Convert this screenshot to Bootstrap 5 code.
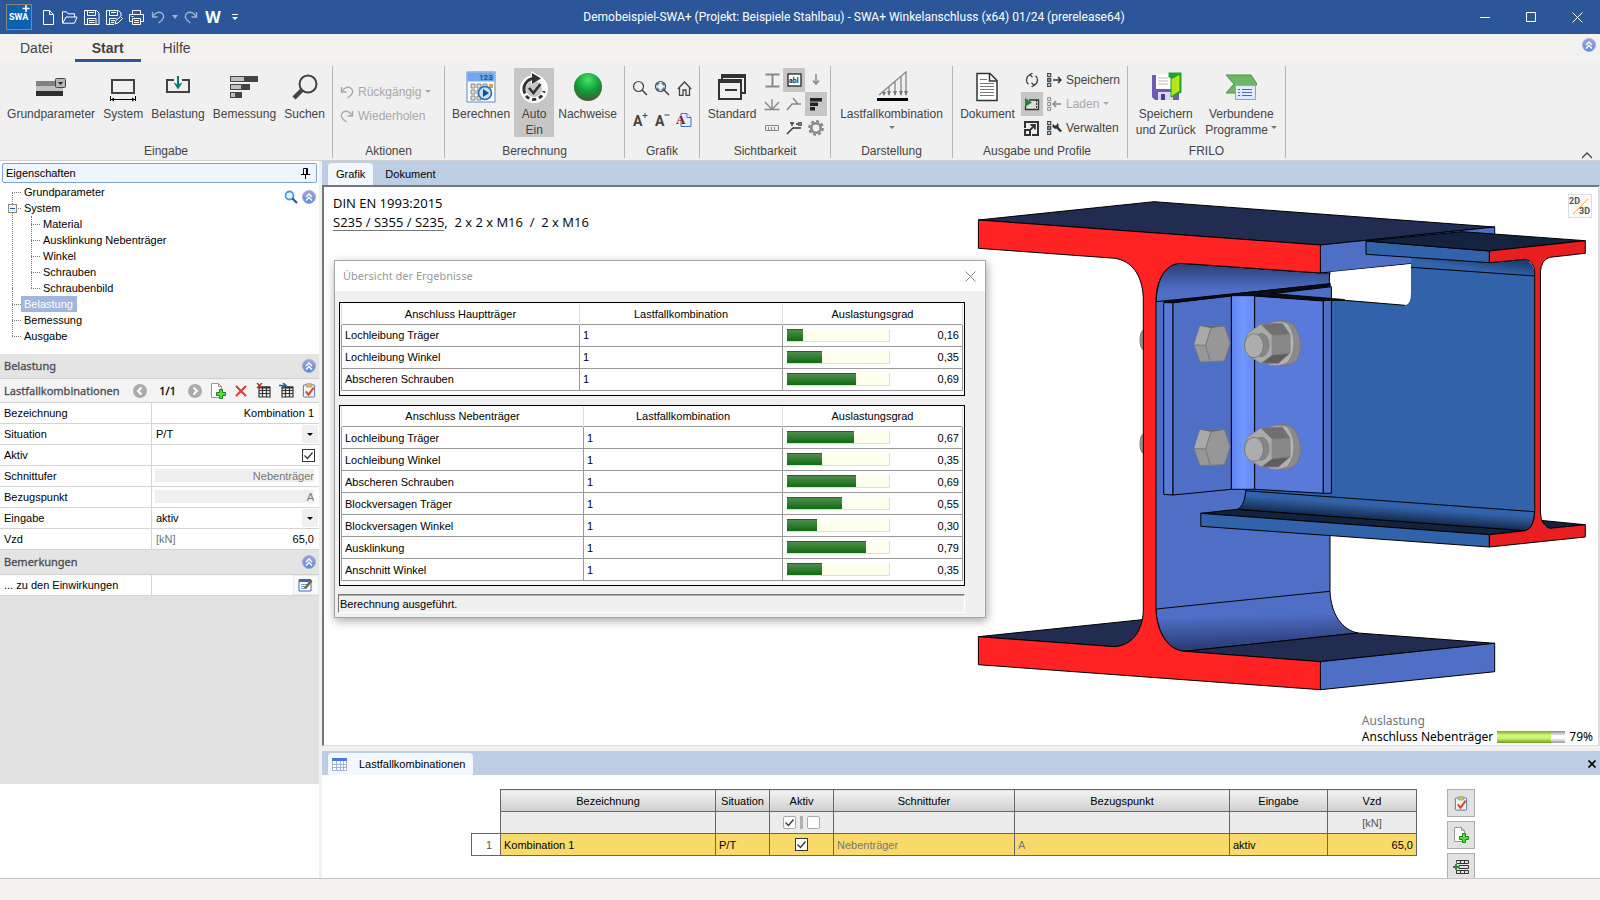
<!DOCTYPE html>
<html lang="de">
<head>
<meta charset="utf-8">
<meta name="viewport" content="width=device-width, initial-scale=1">
<title>SWA+ Winkelanschluss</title>
<link href="https://cdn.jsdelivr.net/npm/bootstrap@5.3.0/dist/css/bootstrap.min.css" rel="stylesheet">
<style>
:root{--ui:"Liberation Sans",Arial,sans-serif;--seg:"Open Sans","Noto Sans",sans-serif}
body{font-family:var(--ui);font-size:11px;line-height:16px;color:#000;background:#f0f0f0}
button{font:inherit;color:inherit;border:0;background:none;padding:0}
svg{display:block;flex:none}
.app{min-height:100vh}
.titlebar{background:#2b579a;color:#fff;height:34px}
.titlebar button{width:22px;height:30px;display:flex;align-items:center;justify-content:center}
.titlebar .narrow{width:11px}
.titlebar .win{width:46px}
.titlebar .dim{opacity:.55}
.app-title{font:12px/16px Roboto,sans-serif}
.word{font:700 16px/16px var(--seg)}
.logo{margin:0 5px 0 6px}
.rtabs{height:28px;background:#f3f2f1;gap:5px;padding-left:3px;font-size:14px;color:#444}
.rtabs button{padding:2px 17px 0;border-bottom:3px solid transparent}
.rtabs .on{font-weight:700;border-color:#2b579a}
.ribbon{height:99px;font-size:12px;color:#444;border-bottom:1px solid #d0d0d0;padding-top:4px}
.rgroup{height:92px;border-right:1px solid #b4b4b4;position:relative;padding:2px 3px 0}
.rgroup .cap{line-height:14px;text-align:center}
.big{flex:1 1 auto;display:flex;flex-direction:column;align-items:center;padding:3px 1px 0;height:69px;text-align:center;line-height:16px;white-space:nowrap}
.big svg{margin-bottom:3px}
.held{background:#c6c6c6}
.g1{width:333px}.g2{width:112px}.g3{width:180px}.g4{width:75px}.g5{width:131px}.g6{width:122px}.g7{width:175px}.g8{width:158px}
.rgroup.g7{padding:2px 7px 0 1px}
.dis{color:#a8a8a8}
.tools{display:grid;grid-template-columns:repeat(3,22px);justify-content:center}
.tools button,.cell{width:22px;height:24px;display:flex;align-items:center;justify-content:center}
.wide-tools button{height:32px}
.side{width:319px}
.pane-title{height:20px;margin:2px 2px 0;border:1px solid #7da2d8;border-radius:2px;background:#eef5fd;padding:0 6px 0 3px}
.tree-box{height:171px;background:#fff;position:relative}
.tree,.tree ul{list-style:none;margin:0;padding:0}
.tree{padding:1px 0 0 12px}
.tree ul{margin-left:7px}
.tree li{position:relative;padding-left:12px}
.tree li::before{content:"";position:absolute;left:0;top:8px;width:9px;border-top:1px dotted #777}
.tree li::after{content:"";position:absolute;left:0;top:-8px;bottom:0;border-left:1px dotted #777}
.tree>li:first-child::after{top:8px}
.tree li:last-child::after{bottom:auto;height:16px}
.tree ul li:first-child::after{top:0}
.tree a{color:#000;text-decoration:none;display:block;width:max-content}
.tree .sel{background:#a0b6de;color:#fff;margin-left:-3px;padding:0 4px 0 3px}
.twist{position:absolute;left:-4px;top:4px;width:9px;height:9px;border:1px solid #888;background:#f4f4f4;z-index:1}
.twist::after{content:"";position:absolute;left:1px;right:1px;top:3px;border-top:1px solid #2a4f9a}
.tree-tools{position:absolute;right:3px;top:7px}
.sec{height:25px;background:#e4e4e4;border-bottom:1px solid #cfcfcf;padding:0 3px 0 4px;font:11px/16px "Noto Sans",sans-serif;color:#4b4b55;-webkit-text-stroke:.3px}
.nav-row{height:24px;background:#f4f4f4;gap:4px}
.prop{display:grid;grid-template-columns:152px 1fr;height:21px;border-bottom:1px solid #d4d4d4;background:#fff}
.prop>label{padding-left:4px;line-height:20px;border-right:1px solid #d4d4d4}
.prop input,.prop select{font:inherit;border:0;background:transparent;width:100%;min-width:0;padding:0;height:20px;color:#000}
.prop input[type=text]{text-align:right;padding-right:5px}
.prop select{appearance:none;padding-left:4px;background:linear-gradient(#efefef,#efefef) right 1px center/16px 18px no-repeat}
.prop .drop{position:relative}
.prop .drop::after{content:"";position:absolute;right:6px;top:9px;border:3px solid transparent;border-top-color:#000;border-bottom:0;pointer-events:none}
.prop input:disabled{background:#efefef;color:#777;height:13px;margin:3px 5px 0 3px;padding-right:0!important;width:calc(100% - 8px)}
.tick{appearance:none;width:13px!important;height:13px!important;border:1px solid #333!important;background:#fff!important;margin:0;flex:none}
.tick:checked{background:#fff url("data:image/svg+xml,%3Csvg xmlns='http://www.w3.org/2000/svg' viewBox='0 0 11 11'%3E%3Cpath d='M1.5 5.5l3 3 5-6' fill='none' stroke='%23333' stroke-width='1.3'/%3E%3C/svg%3E")!important}
.tick.soft{border-color:#aaa!important;border-radius:2px}
.split{width:3px;background:#b5b0b0}
.main-area{margin-left:3px}
.strip{background:#bccde4;height:24px;padding:2px 0 0 6px}
.strip button{padding:0 8px;border-radius:4px 4px 0 0;height:22px}
.strip .on{background:#f2f8fe}
.canvas3d{background:#fff;border:1px solid #777;border-width:2px 2px 1px 2px;border-color:#777 #ddd #ddd #777;height:561px;position:relative;overflow:hidden}
.code-info{position:absolute;left:9px;top:7px;font:13px/19px var(--seg)}
.code-info u{text-underline-offset:3px;text-decoration-color:#777}
.dim-btn{position:absolute;right:6px;top:7px;width:24px;height:24px;border:1px solid #ddd!important;background:#fafafa!important}
.util{position:absolute;right:5px;bottom:0;font:12px/16px "Noto Sans",sans-serif}
.util-bar{width:68px;height:12px;background:linear-gradient(#888,#fff 40%,#fff 60%,#999)}
.util-bar div{height:12px;background:linear-gradient(#7ea62c,#cdf873 35%,#cdf873 60%,#6f9a22)}
.dlg{position:absolute;left:10px;top:73px;width:652px;height:358px;border:1px solid #a5a5a5;background:#f0f0f0;box-shadow:1px 3px 9px rgba(0,0,0,.35)}
.dlg-head{height:30px;background:#fff;padding:0 9px 0 8px;color:#999;font:11px/16px "Noto Sans",sans-serif}
.dlg-body{padding:11px 20px 0 4px}
.frame{border:1px solid #000;background:#fafaff;padding:1px 1px 4px;margin-bottom:9px}
.frame + .status-line{margin-top:-1px}
.res{width:100%;table-layout:fixed;border-collapse:collapse;background:#fff}
.res th{font-weight:400;text-align:center;height:20px;padding:0;border:solid #ddd;border-width:0 1px;border-color:#fff #ddd}
.res td{height:22px;border:1px solid #999;padding:0 3px}
.res .meter{width:103px;height:13px;background:#ffffee;border:solid #ddd;border-width:0 1px 1px 0;margin-left:1px}
.meter div{height:12px;background:linear-gradient(#4f8c4f,#0f6d0f);border-top:1px solid #157015}
.status-line{height:19px;border:1px solid #fff;border-color:#777 #fff #fff #777;box-shadow:inset 0 1px #aaa;line-height:18px;padding-left:1px;margin-left:-1px}
.combo-strip{margin-top:5px;height:24px}
.combo-panel{background:#fff;flex:1 1 0;min-height:0;overflow:hidden;padding:14px 125px 0 149px}
.combos{table-layout:fixed;width:946px;border-collapse:collapse}
.combos th,.combos td{border:1px solid #666;height:22px;padding:0 3px}
.combos th{font-weight:400;text-align:center;background:linear-gradient(#f3f3f3,#cfcfcf);padding:0}
.combos .units td{background:#ececec;color:#555;text-align:center}
.combos .pick td{background:#fad96b}
.combos .none{border:0!important;background:#fff!important}
.combos .pick .num{background:#fff;color:#555;text-align:right;padding-right:8px}
.combos .ro{color:#777}
.vtools button{display:flex;align-items:center;justify-content:center;width:28px;height:28px;background:#e2e2e2;border:1px solid #adadad;margin-bottom:4px}
.rest{height:188px;background:#e1e1e1}
.footer-bar{height:22px;border-top:1px solid #c4c4c4;background:#f3f2f1}
</style>
</head>
<body>
<svg width="0" height="0" class="position-absolute" aria-hidden="true">
<defs>
<linearGradient id="lavender" x1="0" y1="0" x2="0" y2="1"><stop offset="0" stop-color="#a3a0da"/><stop offset="1" stop-color="#5a8fd6"/></linearGradient>
<symbol id="collapse" viewBox="0 0 14 14"><circle cx="7" cy="7" r="6.500" fill="url(#lavender)" stroke="#8fa6dc" stroke-width=".8"/><path d="M4 7l3-3 3 3M4 10.500l3-3 3 3" fill="none" stroke="#fff" stroke-width="1.400"/></symbol>
<symbol id="undo" viewBox="0 0 14 14"><path d="M1.500 2v5h5M1.500 7C4 3 8 .8 11 3.300s2 6-3.500 9.700" fill="none" stroke="currentColor" stroke-width="1.300"/></symbol>
<symbol id="redo" viewBox="0 0 14 14"><path d="M12.500 2v5h-5M12.500 7C10 3 6 .8 3 3.300s-2 6 3.500 9.700" fill="none" stroke="currentColor" stroke-width="1.300"/></symbol>
<symbol id="pageplus" viewBox="0 0 16 16"><path d="M1.500.5h7l3 3v11h-10z" fill="#fff" stroke="#999"/><path d="M8.500.5v3h3" fill="none" stroke="#999"/><path d="M9.500 6.500h3v3h3v3h-3v3h-3v-3h-3v-3h3z" fill="#55dc3c" stroke="#128a12"/></symbol>
<symbol id="clip" viewBox="0 0 14 16"><rect x="1" y="2" width="12" height="13" rx="1" fill="#eef3fc" stroke="#5474a8"/><rect x="4" y=".7" width="6" height="3.600" rx="1" fill="#d8c07a" stroke="#907c40" stroke-width=".6"/><path d="M3.500 9l3 3.500L12 5" fill="none" stroke="#e04a22" stroke-width="2.200"/></symbol>
<symbol id="lens" viewBox="0 0 16 16"><circle cx="6.500" cy="6.500" r="5" fill="none" stroke="currentColor" stroke-width="1.200"/><path d="M10 10l5 5" stroke="currentColor" stroke-width="1.600"/></symbol>
<symbol id="list3" viewBox="0 0 15 14"><path d="M.7.7h3v3h-3zM.7 10.300h3v3h-3z" fill="#fff" stroke="currentColor" stroke-width="1.200"/><path d="M.7 5.500h3v3h-3z" fill="#4ab4e8" stroke="currentColor" stroke-width="1.200"/></symbol>
</defs>
</svg>
<div class="app d-flex flex-column">
<header class="titlebar d-flex align-items-center">
 <svg class="logo" width="26" height="26" viewBox="0 0 26 26"><rect x=".5" y=".5" width="25" height="25" fill="#0a62b0" stroke="#8b8578"/><text x="3" y="16" font-size="9" font-weight="700" fill="#fff" font-family="Roboto">SWA</text><path d="M20 1v7M16.500 4.500h7" stroke="#fff" stroke-width="1.500"/></svg>
 <button aria-label="Neu"><svg width="11" height="15" viewBox="0 0 11 15" fill="none" stroke="#fff"><path d="M.5.5h6l4 4v10H.5zM6.500.5v4h4"/></svg></button>
 <button aria-label="Öffnen"><svg width="16" height="13" viewBox="0 0 16 13" fill="none" stroke="#fff"><path d="M.5 12V.8h4l1.500 2h6.500V6M.7 12.200L4 6h11l-2.500 6.200z"/></svg></button>
 <button aria-label="Speichern"><svg width="16" height="15" viewBox="0 0 16 15" fill="none" stroke="#fff"><path d="M.5.5h12l2.500 2.500v11.500H.5zM3.500.5v5h8v-5M3.500 14V8.500h8.500V14M5 2.500h5M5 10.500h5.500M5 12.500h5.500"/></svg></button>
 <button aria-label="Speichern unter"><svg width="17" height="15" viewBox="0 0 17 15" fill="none" stroke="#fff"><path d="M8 14.500H.5V.5h12l2.500 2.500v3M3.500.5v5h8v-5M3.500 14V8.500h7M5 2.500h5M5 10.500h4M5 12.500h3M9 14l1-3.500 4.500-4 2 2-4.500 4.500z"/></svg></button>
 <button aria-label="Drucken"><svg width="15" height="15" viewBox="0 0 15 15" fill="none" stroke="#fff"><path d="M3.500 4V.5h8V4M3.500 11.500H.5v-7h14v7h-3M3.500 8.500h8v6h-8zM5 10.500h5M5 12.500h5M2.500 6.500h2"/></svg></button>
 <button class="dim" aria-label="Rückgängig"><svg width="14" height="14"><use href="#undo"/></svg></button>
 <button class="narrow dim" aria-label="Verlauf"><svg width="6" height="4"><path d="M0 0h6L3 4z" fill="#fff"/></svg></button>
 <button class="dim" aria-label="Wiederholen"><svg width="14" height="14"><use href="#redo"/></svg></button>
 <button class="word">W</button>
 <button aria-label="Anpassen"><svg width="6" height="7"><path d="M0 .5h6" stroke="#fff"/><path d="M0 3h6L3 6z" fill="#fff"/></svg></button>
 <div class="app-title flex-grow-1 text-center">Demobeispiel-SWA+ (Projekt: Beispiele Stahlbau) - SWA+ Winkelanschluss (x64) 01/24 (prerelease64)</div>
 <div class="d-flex">
 <button class="win" aria-label="Minimieren"><svg width="10" height="10"><path d="M0 5.500h10" stroke="#fff"/></svg></button>
 <button class="win" aria-label="Maximieren"><svg width="11" height="11"><path d="M.5.5h9v9h-9z" fill="none" stroke="#fff"/></svg></button>
 <button class="win" aria-label="Schließen"><svg width="11" height="11"><path d="M.5.5l10 10M10.500.5l-10 10" stroke="#fff"/></svg></button></div>
</header>
<nav class="rtabs d-flex">
 <button>Datei</button><button class="on">Start</button><button>Hilfe</button>
 <button class="ms-auto px-1 border-0" aria-label="Menüband einklappen"><svg width="14" height="14" class="mb-2"><use href="#collapse"/></svg></button>
</nav>
<section class="ribbon d-flex">
 <div class="rgroup g1 d-flex flex-column justify-content-between"><div class="d-flex">
  <button class="big"><svg width="32" height="32" viewBox="0 0 32 32"><rect x="1" y="10" width="27" height="6" fill="#808080"/><rect x="1" y="15" width="27" height="5" fill="#c0c0c0"/><rect x="1" y="20" width="27" height="5" fill="#2e2e2e"/><rect x="20.500" y="7.500" width="10" height="9" rx="1" fill="#b5b5b5" stroke="#444"/><path d="M23 11h5l-2.500 3z" fill="#222"/></svg>Grundparameter</button>
  <button class="big"><svg width="32" height="32" viewBox="0 0 32 32" fill="none" stroke="#444"><rect x="5" y="9" width="22" height="13" stroke-width="2"/><path d="M3.500 25v5M28.500 25v5M4 28.500h24" stroke="#000"/><path d="M4 28.500l3-2v4zM28 28.500l-3-2v4z" fill="#000" stroke="none"/></svg>System</button>
  <button class="big"><svg width="32" height="32" viewBox="0 0 32 32"><path d="M12 9H5v12h22V9h-7" fill="none" stroke="#444" stroke-width="2"/><path d="M16 5v9" stroke="#007d7d" stroke-width="2"/><path d="M11.500 11.500l4.500 7 4.500-7-4.500 2z" fill="#007d7d"/></svg>Belastung</button>
  <button class="big"><svg width="32" height="32" viewBox="0 0 32 32" stroke="#444"><g fill="#444"><rect x="2.500" y="5.500" width="27" height="5"/><rect x="2.500" y="13.500" width="19" height="5"/><rect x="2.500" y="21.500" width="11" height="5"/></g><path fill="#c0c0c0" d="M2.500 5.500h14v5h-14zM2.500 13.500h11v5h-11zM2.500 21.500h5v5h-5z"/></svg>Bemessung</button>
  <button class="big"><svg width="32" height="32" viewBox="0 0 32 32" fill="none" stroke="#444"><circle cx="19" cy="13" r="8.500" stroke-width="2"/><path d="M13 19l-8 8" stroke-width="4.500"/></svg>Suchen</button>
 </div><div class="cap">Eingabe</div></div>
 <div class="rgroup g2 d-flex flex-column justify-content-between"><div class="dis ps-1 pt-3">
  <button class="d-flex align-items-center gap-1 mb-2"><svg width="14" height="14"><use href="#undo"/></svg>Rückgängig <svg width="6" height="4"><path d="M0 0h6L3 3z" fill="#a8a8a8"/></svg></button>
  <button class="d-flex align-items-center gap-1"><svg width="14" height="14"><use href="#redo"/></svg>Wiederholen</button>
 </div><div class="cap">Aktionen</div></div>
 <div class="rgroup g3 d-flex flex-column justify-content-between"><div class="d-flex">
  <button class="big"><svg width="32" height="32" viewBox="0 0 32 32"><rect x="2" y="1" width="28" height="30" fill="#fff" stroke="#5d87c8"/><path d="M2.500 1.500h27v9h-27z" fill="#70a8ee"/><text x="14" y="9" font-size="8" font-weight="700" fill="#24518f" font-family="Roboto">123</text><path d="M6 13h4v4H6zM12 13h4v4h-4zM18 13h4v4h-4zM6 19h4v4H6zM12 19h4v4h-4zM6 25h4v4H6zM12 25h4v4h-4z" fill="#ddd" stroke="#888"/><path d="M24 13h4v4h-4z" fill="#eb9b3a"/><circle cx="20" cy="22" r="6.500" fill="#c4e2ff" stroke="#2b6ba9" stroke-width="1.500"/><path d="M18 18l6 4-6 4z" fill="#174c94"/></svg>Berechnen</button>
  <button class="big held"><svg width="32" height="32" viewBox="0 0 32 32"><path d="M13 0l12 6.500L13 14z" fill="#fff"/><circle cx="16" cy="18" r="11" fill="none" stroke="#fff" stroke-width="6"/><path d="M16 7.500a10.500 10.500 0 0 0-9 15" fill="none" stroke="#333" stroke-width="3"/><path d="M8 25a10.500 10.500 0 0 0 18-5" fill="none" stroke="#333" stroke-width="3" stroke-dasharray="4 3"/><path d="M14 2l9 5.500-9 5.500z" fill="#333"/><path d="M11 17l4.500 5 7-9" fill="none" stroke="#333" stroke-width="2.600"/></svg>Auto<br>Ein</button>
  <button class="big"><svg width="32" height="32" viewBox="0 0 32 32"><defs><radialGradient id="ball" cx=".5" cy=".25" r=".85"><stop offset="0" stop-color="#48e468"/><stop offset=".5" stop-color="#109a36"/><stop offset="1" stop-color="#5b4636"/></radialGradient></defs><circle cx="16" cy="16" r="14" fill="url(#ball)"/></svg>Nachweise</button>
 </div><div class="cap">Berechnung</div></div>
 <div class="rgroup g4 d-flex flex-column justify-content-between"><div class="tools wide-tools pt-1">
  <button aria-label="Zoom"><svg width="16" height="16"><use href="#lens"/></svg></button>
  <button aria-label="Zoom Fenster"><svg width="16" height="16" viewBox="0 0 16 16"><use href="#lens"/><path d="M3.500 5.500v-2h2M7.500 3.500h2v2M9.500 7.500v2h-2M5.500 9.500h-2v-2" fill="none" stroke="#1788d0" stroke-width="1.400"/></svg></button>
  <button aria-label="Alles"><svg width="15" height="15" viewBox="0 0 15 15" fill="none" stroke="#444" stroke-width="1.300"><path d="M.8 8l6.700-7 6.700 7M2.500 6.500v7.800h3.500V9h3v5.300h3.500V6.500"/></svg></button>
  <button aria-label="Schrift größer"><svg width="16" height="16" viewBox="0 0 16 16"><text x="1" y="14" font-size="14" font-weight="700" fill="#444" font-family="Roboto">A</text><path d="M13 1v5M10.500 3.500h5" stroke="#444"/></svg></button>
  <button aria-label="Schrift kleiner"><svg width="16" height="16" viewBox="0 0 16 16"><text x="1" y="14" font-size="14" font-weight="700" fill="#444" font-family="Roboto">A</text><path d="M10.500 3h5" stroke="#444"/></svg></button>
  <button aria-label="Schriftart"><svg width="16" height="16" viewBox="0 0 16 16"><path d="M5 1.500h6l4 4v9H5z" fill="#e4edfb" stroke="#4a70b4"/><path d="M11 1.500v4h4" fill="#fff" stroke="#4a70b4"/><text x="0" y="12" font-size="13" font-weight="700" fill="#8e0d12" font-family="Liberation Serif">A</text></svg></button>
 </div><div class="cap">Grafik</div></div>
 <div class="rgroup g5 d-flex flex-column justify-content-between"><div class="d-flex">
  <button class="big"><svg width="32" height="32" viewBox="0 0 32 32" fill="#f0f0f0" stroke="#333" stroke-width="2"><rect x="6" y="4" width="23" height="18"/><path d="M5 5h25" stroke-width="4"/><rect x="3" y="9" width="22" height="19"/><path d="M2 10h24" stroke-width="4"/><path d="M9 19h12"/></svg>Standard</button>
  <div class="tools">
  <button aria-label="Profil"><svg width="15" height="15" viewBox="0 0 15 15" fill="none" stroke="#888" stroke-width="2"><path d="M.5 1.500h14M.5 13.500h14M7.500 2v11"/></svg></button>
  <button class="held" aria-label="Text"><svg width="15" height="14" viewBox="0 0 15 14"><rect x="1" y="1" width="13" height="12" fill="#fff" stroke="#222" stroke-width="1.300"/><text x="2" y="10" font-size="7" font-weight="700" fill="#222" font-family="Roboto">abl</text></svg></button>
  <button aria-label="Last"><svg width="8" height="12" viewBox="0 0 8 12" fill="none" stroke="#888" stroke-width="1.500"><path d="M4 0v10M1 6.500l3 3.500 3-3.500"/></svg></button>
  <button aria-label="Winkel"><svg width="16" height="14" viewBox="0 0 16 14" fill="none" stroke="#888"><path d="M.5 12.500h15" stroke-width="1.500"/><path d="M8 12V2M7.500 12L1 5M8.500 12L15 5" stroke-width="1.300"/></svg></button>
  <button aria-label="Naht"><svg width="16" height="14" viewBox="0 0 16 14" fill="none" stroke="#888" stroke-width="1.400"><path d="M1 13l5-6h9M7 1l5 6"/></svg></button>
  <button class="held" aria-label="Balken"><svg width="12" height="13" viewBox="0 0 12 13" fill="#222"><path d="M0 0h12v3.500H0zM0 4.500h8V8H0zM0 9h5v3.500H0z"/></svg></button>
  <button aria-label="Maßstab"><svg width="14" height="6" viewBox="0 0 14 6" fill="none" stroke="#888"><path d="M.5.5h13v5H.5zM3.500 2v3M6.500 2v3M9.500 2v3"/></svg></button>
  <button aria-label="Bezeichner"><svg width="16" height="14" viewBox="0 0 16 14" fill="none" stroke="#333" stroke-width="1.400"><path d="M1 13l6-6h8M4 2h4M6 2v3M10 3h2M13 1v4M15 1v4"/></svg></button>
  <button aria-label="Optionen"><svg width="16" height="16" viewBox="0 0 16 16"><circle cx="8" cy="8" r="6.800" fill="none" stroke="#888" stroke-width="2.200" stroke-dasharray="3 2.340"/><circle cx="8" cy="8" r="4.700" fill="none" stroke="#888" stroke-width="2.600"/></svg></button>
  </div>
 </div><div class="cap">Sichtbarkeit</div></div>
 <div class="rgroup g6 d-flex flex-column justify-content-between"><div class="d-flex">
  <button class="big"><svg width="32" height="32" viewBox="0 0 32 32"><path d="M3 24L30 1v23M25 6v18M19 11v13M13 16v8M8 20v4" fill="none" stroke="#888" stroke-width="1.300"/><path d="M28 20h4l-2 5zM23 20h4l-2 5zM17 20h4l-2 5zM11 20h4l-2 5zM6 21h4l-2 4z" fill="#777"/><path d="M1 28.500h31" stroke="#000" stroke-width="3"/></svg>Lastfallkombination<svg width="6" height="4" class="mt-1"><path d="M0 0h6L3 3z" fill="#777"/></svg></button>
 </div><div class="cap">Darstellung</div></div>
 <div class="rgroup g7 d-flex flex-column justify-content-between"><div class="d-flex">
  <button class="big"><svg width="32" height="32" viewBox="0 0 32 32" fill="#fff" stroke="#333"><path d="M6 2.500h13l7 7v20H6z" stroke-width="1.500"/><path d="M18.500 3v7H26" fill="none" stroke-width="1.500"/><path d="M9 8.500h7M9 12.500h14M9 15.500h14M9 18.500h14M9 21.500h14M9 24.500h14" stroke="#777"/></svg>Dokument</button>
  <div class="d-flex flex-column">
   <button class="cell" aria-label="Aktualisieren"><svg width="14" height="14" viewBox="0 0 14 14" fill="none" stroke="#444" stroke-width="1.300"><path d="M5.500 1.700a5.500 5.500 0 0 0-2 9.500M8.500 12.300a5.500 5.500 0 0 0 2-9.500M7.500 0L5 1.700l2.500 2.500M6.500 14L9 12.300 6.500 9.800"/></svg></button>
   <button class="cell held" aria-label="Vorschau"><svg width="16" height="13" viewBox="0 0 16 13"><path d="M5 2h9.500v9.500h-13V8" fill="#ddd" stroke="#333" stroke-width="1.300"/><path d="M12.500 2v9" stroke="#333" stroke-dasharray="2 1"/><path d="M1 0l7 4.500L1 9z" fill="#1c8a2c"/></svg></button>
   <button class="cell" aria-label="Maximieren"><svg width="15" height="15" viewBox="0 0 15 15"><path d="M1 7V1h13v13H8" fill="none" stroke="#333" stroke-width="2"/><path d="M0 8h7v7H0z" fill="#333"/><path d="M2 10h3v3H2z" fill="#f0f0f0"/><path d="M6 9l5-5M6.500 4H11v4.500" fill="none" stroke="#333" stroke-width="1.800"/></svg></button>
  </div>
  <div class="d-flex flex-column text-nowrap">
   <button class="d-flex align-items-center gap-1 ps-1 cell w-auto justify-content-start"><svg width="15" height="14" viewBox="0 0 15 14"><use href="#list3"/><path d="M6 7h8M11 4l3 3-3 3" fill="none" stroke="#333" stroke-width="1.500"/></svg>Speichern</button>
   <button class="d-flex align-items-center gap-1 ps-1 cell w-auto justify-content-start dis"><svg width="15" height="14" viewBox="0 0 15 14"><path d="M.7.7h3v3h-3zM.7 5.500h3v3h-3zM.7 10.300h3v3h-3z" fill="none" stroke="#888"/><path d="M14 7H6M9 4L6 7l3 3" fill="none" stroke="#888" stroke-width="1.500"/></svg>Laden <svg width="6" height="4"><path d="M0 0h6L3 3z" fill="#a8a8a8"/></svg></button>
   <button class="d-flex align-items-center gap-1 ps-1 cell w-auto justify-content-start"><svg width="15" height="14" viewBox="0 0 15 14"><use href="#list3"/><path d="M8.500 4.500l5.500 6" stroke="#333" stroke-width="2.500"/><path d="M6 3a3 3 0 1 0 4-1v2L8 5z" fill="#333"/></svg>Verwalten</button>
  </div>
 </div><div class="cap">Ausgabe und Profile</div></div>
 <div class="rgroup g8 d-flex flex-column justify-content-between"><div class="d-flex">
  <button class="big"><svg width="32" height="32" viewBox="0 0 32 32"><path d="M2 4h27v25H5l-3-3z" fill="#6d5bb4"/><path d="M6 3h16v15H6z" fill="#fff"/><path d="M8 7h10M8 10h10M8 13h10" stroke="#bbb"/><path d="M8 21h15v8H8z" fill="#dcd8f2"/><path d="M11 23h4v6h-4z" fill="#4d3d92"/><path d="M18.500 1.500h13v20l-10 5V8l-3-2z" fill="#1fa52e"/><path d="M21 8l9-5v17l-9 6z" fill="#b5e617" stroke="#23a025"/></svg>Speichern<br>und Zurück</button>
  <button class="big"><svg width="32" height="32" viewBox="0 0 32 32"><path d="M1 4h25l6 9-6 9H1l8-9z" fill="#6cb665" stroke="#4c9147"/><rect x="10.500" y="14.500" width="20" height="14" fill="#dceafc" stroke="#84a8d6"/><path d="M13 18.500h2M17 18.500h10M13 21.500h2M17 21.500h10M13 24.500h2M17 24.500h10" stroke="#4a6ea9"/></svg>Verbundene<br><span>Programme <svg class="d-inline-block align-middle" width="6" height="6"><path d="M0 0h6L3 3z" fill="#777"/></svg></span></button>
 </div><div class="cap">FRILO</div></div>
 <div class="ms-auto align-self-end px-2"><svg width="10" height="8"><path d="M0 6l5-5 5 5" fill="none" stroke="#444" stroke-width="1.300"/></svg></div>
</section>
<main class="d-flex flex-grow-1">
 <aside class="side d-flex flex-column flex-shrink-0 bg-white">
  <div class="pane-title d-flex justify-content-between align-items-center">Eigenschaften<svg width="9" height="11" viewBox="0 0 9 11" fill="none" stroke="#000"><path d="M2.500 6V.5h4V6M5.500.5V6M0 6.500h9M4.500 7v4"/></svg></div>
  <div class="tree-box">
   <ul class="tree">
    <li><a href="#">Grundparameter</a></li>
    <li><span class="twist"></span><a href="#">System</a>
     <ul><li><a href="#">Material</a></li><li><a href="#">Ausklinkung Nebenträger</a></li><li><a href="#">Winkel</a></li><li><a href="#">Schrauben</a></li><li><a href="#">Schraubenbild</a></li></ul></li>
    <li><a href="#" class="sel">Belastung</a></li>
    <li><a href="#">Bemessung</a></li>
    <li><a href="#">Ausgabe</a></li>
   </ul>
   <div class="tree-tools d-flex gap-1"><svg width="14" height="14" viewBox="0 0 14 14"><circle cx="5.500" cy="5.500" r="4" fill="#eaf5ff" stroke="#4a9ae0" stroke-width="1.800"/><path d="M8.500 8.500l4.500 4.500" stroke="#2a4fa0" stroke-width="2.200"/></svg><svg width="14" height="14"><use href="#collapse"/></svg></div>
  </div>
  <div class="sec d-flex align-items-center justify-content-between">Belastung<svg width="14" height="14"><use href="#collapse"/></svg></div>
  <div class="sec nav-row d-flex align-items-center"><span class="flex-grow-1">Lastfallkombinationen</span>
   <svg width="14" height="14" viewBox="0 0 14 14"><circle cx="7" cy="7" r="7" fill="#ababab"/><path d="M8.500 3.500L5 7l3.500 3.500" fill="none" stroke="#fff" stroke-width="2"/></svg>
   <span class="px-2 text-black">1/1</span>
   <svg width="14" height="14" viewBox="0 0 14 14"><circle cx="7" cy="7" r="7" fill="#ababab"/><path d="M5.500 3.500L9 7l-3.500 3.500" fill="none" stroke="#fff" stroke-width="2"/></svg>
   <button class="ms-1" aria-label="Neu"><svg width="16" height="16"><use href="#pageplus"/></svg></button>
   <button class="ms-1" aria-label="Löschen"><svg width="14" height="12" viewBox="0 0 14 12"><path d="M2 1l10 10M12 1L2 11" stroke="#d8433e" stroke-width="2.200"/></svg></button>
   <button class="ms-1" aria-label="Tabelle löschen"><svg width="15" height="15" viewBox="0 0 15 15"><path d="M3 4h11v10H3zM3 7.500h11M3 10.500h11M6.500 5v9M10.500 5v9" fill="none" stroke="#333" stroke-width="1.200"/><path d="M3 4.500h11" stroke="#333" stroke-width="2"/><path d="M1 0l5 5M6 0L1 5" stroke="#b3322c" stroke-width="1.500"/></svg></button>
   <button class="ms-1" aria-label="Tabelle einfügen"><svg width="15" height="15" viewBox="0 0 15 15"><path d="M3 4h11v10H3zM3 7.500h11M3 10.500h11M6.500 5v9M10.500 5v9" fill="none" stroke="#333" stroke-width="1.200"/><path d="M3 4.500h11" stroke="#333" stroke-width="2"/><path d="M0 2.500h6M4 0l3 2.500L4 5" fill="none" stroke="#1764a8" stroke-width="1.500"/></svg></button>
   <button class="ms-1" aria-label="Prüfen"><svg width="14" height="15"><use href="#clip"/></svg></button>
  </div>
  <div class="prop"><label for="p1">Bezeichnung</label><input id="p1" type="text" value="Kombination 1"></div>
  <div class="prop"><label for="p2">Situation</label><div class="drop"><select id="p2"><option>P/T</option></select></div></div>
  <div class="prop"><label for="p3">Aktiv</label><div class="d-flex justify-content-end align-items-center pe-1"><input id="p3" type="checkbox" class="tick" checked></div></div>
  <div class="prop"><label for="p4">Schnittufer</label><input id="p4" type="text" value="Nebenträger" disabled></div>
  <div class="prop"><label for="p5">Bezugspunkt</label><input id="p5" type="text" value="A" disabled></div>
  <div class="prop"><label for="p6">Eingabe</label><div class="drop"><select id="p6"><option>aktiv</option></select></div></div>
  <div class="prop"><label for="p7">Vzd</label><div class="d-flex align-items-center ps-1"><span class="text-secondary">[kN]</span><input id="p7" type="text" value="65,0"></div></div>
  <div class="sec d-flex align-items-center justify-content-between">Bemerkungen<svg width="14" height="14"><use href="#collapse"/></svg></div>
  <div class="prop"><label for="p8">... zu den Einwirkungen</label><div class="d-flex justify-content-end"><button id="p8" class="border border-secondary-subtle px-1 bg-light" aria-label="Bearbeiten"><svg width="16" height="14" viewBox="0 0 16 14"><path d="M1 2h12v11H1z" fill="#fff" stroke="#3a6ab0"/><path d="M1 2.500h12" stroke="#3a6ab0" stroke-width="3"/><path d="M3 6.500h6M3 8.500h4M3 10.500h4" stroke="#7a9ac8"/><path d="M7 10.500l6.500-8" stroke="#7d6430" stroke-width="2.500"/></svg></button></div></div>
  <div class="rest"></div>
 </aside>
 <div class="main-area flex-grow-1 d-flex flex-column">
  <div class="strip d-flex"><button class="on">Grafik</button><button class="ms-1">Dokument</button></div>
  <div class="canvas3d d-flex justify-content-end">
   <svg width="638" height="558" viewBox="960 187 638 558" stroke-linejoin="round" role="img" aria-label="3D-Ansicht Winkelanschluss">
    <defs>
     <linearGradient id="f1" x1="0" y1="0" x2="0" y2="1"><stop offset="0" stop-color="#2d3d72"/><stop offset=".7" stop-color="#4f6ec5"/></linearGradient>
     <linearGradient id="f2" x1=".4" y1="0" x2=".5" y2="1"><stop offset=".4" stop-color="#4f6ec5"/><stop offset="1" stop-color="#26356a"/></linearGradient>
     <linearGradient id="f3" gradientUnits="userSpaceOnUse" x1="1400" y1="501" x2="1398.500" y2="521"><stop offset=".3" stop-color="#3262a9"/><stop offset="1" stop-color="#152b50"/></linearGradient>
     <linearGradient id="f4" x1="0" y1="0" x2="1" y2="0"><stop offset="0" stop-color="#5f83ee"/><stop offset=".5" stop-color="#7098ff"/><stop offset="1" stop-color="#6288f2"/></linearGradient>
     <linearGradient id="f5" gradientUnits="userSpaceOnUse" x1="1494" y1="272" x2="1496" y2="258"><stop offset="0" stop-color="#3262a9"/><stop offset="1" stop-color="#1d3c6c"/></linearGradient>
     <g id="bolt">
      <path d="M1200 326h24.500l5.700 17-5.700 18-24.500 1-6-17z" fill="#979797" stroke="#787878"/>
      <path d="M1200 326l11 2-5.500 17.300-11.500-.3z" fill="#a9a9a9"/><path d="M1200 326h24.500l-13.500 2z" fill="#666"/>
      <path d="M1194 345l11.700.3 4.300 16.400M1205.700 345.300L1211 328" fill="none" stroke="#777"/>
      <path d="M1277 321q12-2 18 6 6 9 5.500 20t-6 15q-8 5-17 3z" fill="#8a8a8a" stroke="#777"/>
      <path d="M1270 323q10-3 17 0 7 8 7 20t-7 20q-8 4-18 2z" fill="#b2b2b2" stroke="#808080" stroke-width=".7"/>
      <path d="M1260.800 324.300L1282.400 323.300 1289.800 334.300 1272.200 335.500z" fill="#707070" stroke="#7c7c7c"/>
      <path d="M1272.200 335.500L1289.800 334.300V353.300L1272.200 355z" fill="#888" stroke="#7c7c7c"/>
      <path d="M1272.200 355L1289.800 353.300 1278.400 363.300H1261.200z" fill="#5d5d5d" stroke="#7c7c7c"/>
      <path d="M1247.800 333.300L1260.800 324.300 1272.200 335.500V355L1261.200 363.300 1249.800 356.700 1244 346z" fill="#aaa" stroke="#858585"/>
      <ellipse cx="1261" cy="345" rx="8" ry="11.500" fill="#868686" stroke="#777" stroke-width=".7"/>
      <ellipse cx="1254" cy="345.700" rx="9.500" ry="12" fill="#adadad" stroke="#7a7a7a"/>
     </g>
    </defs>
    <g stroke="#000">
     <path d="M978.400 220L1154 201.700 1494.700 227 1320.400 245z" fill="#212c50"/>
     <path d="M1320.400 245L1494.700 227v28L1320.400 273z" fill="#4f6ec5"/>
     <path d="M978.400 636.700L1142 619.700 1150 640 1115 646.700z" fill="#212c50"/>
     <path d="M1156 301.700V280L1180 263l140.400 10H1330v318.300L1156 609z" fill="#4f6ec5" stroke="none"/>
     <path d="M1156 301.700C1157 280 1165 264 1180 263.300L1320 273h10c-1 4-1 8 0 11z" fill="url(#f1)"/>
     <path d="M1330 284v307.300" fill="none"/>
     <path d="M1156 609L1330 591.300C1331 614 1342 630 1358 633L1184.500 651.300C1168 650 1157 632 1156 609z" fill="url(#f2)"/>
     <path d="M1184.500 651.300L1358 633l136.700 10.300-174.300 18.400z" fill="#212c50"/>
     <path d="M1320.400 661.700l174.300-18.400v28.400l-174.300 18z" fill="#4f6ec5"/>
     <g fill="#999" stroke="#777"><ellipse cx="1144" cy="340" rx="4" ry="10"/><ellipse cx="1144" cy="443.700" rx="4" ry="10"/></g>
     <path d="M978.400 220l342 25v28L1180.400 263.300C1165 264 1156 280 1156 301.700V610C1157 633 1168 650 1184.500 651.300l135.900 10.400v28L978.400 664.700v-28L1115 646.700C1132 645 1142 632 1143.300 611.700V297C1142 275 1132 261 1115 258.300L978.400 248.300z" fill="#ff2323"/>
    </g>
    <path d="M1331 272L1411 264v29.300q0 8-3 12H1405L1331 299z" fill="#fff"/>
    <path d="M1240 400L1331 299 1405 305.300q6-1 6-12V257.600L1489.400 262.700 1525 259l9.700 12V512L1245.700 490.700z" fill="#3262a9"/>
    <path d="M1411 257.600L1489.400 262.700 1525.300 259.300q9 3 9.400 16.700L1411 267.300z" fill="url(#f5)"/>
    <g stroke="#000">
     <path d="M1411 267.300L1534.700 276M1344.500 300.300L1405 305.300" fill="none"/>
     <path d="M1366 241L1489.400 251v11.700L1366 254.300z" fill="#3262a9"/>
     <path d="M1366 241L1462 231.700 1585.300 240.700 1489.400 251z" fill="#13233e"/>
     <path d="M1542 520.500L1585.300 524.700 1549 529z" fill="#13233e"/>
     <path d="M1200.800 513.300L1237.500 509.300 1525.300 530.700 1489.400 534.700z" fill="#13233e"/>
     <path d="M1245.700 490.700L1534.700 511.700C1534 523 1531 529 1525.300 530.700L1237.500 509.300C1243 506 1245 500 1245.700 490.700z" fill="url(#f3)"/>
     <path d="M1200.800 513.300L1489.400 534.700V547L1200.800 526.300z" fill="#3262a9"/>
     <path d="M1489.400 251L1585.300 240.700v12.600L1549.800 257.300Q1541 260 1540.400 272V512Q1541 526 1549.800 528.300L1585.300 524.700V537L1489.400 547V534.700L1525.300 530.700Q1534 528 1534.700 512V272Q1534 261 1525.300 259.300L1489.400 262.700z" fill="#e81e20"/>
     <path d="M1163.700 302.700H1173V495L1163.700 494.300z" fill="#5a7adb"/>
     <path d="M1173 302.700L1231.400 296V489.300L1173 495z" fill="#4f6ec5"/>
     <path d="M1231.400 295h23.300V489.300H1231.400z" fill="url(#f4)"/>
     <path d="M1254.700 296L1323.300 301V493.300L1254.700 489.300z" fill="#5a7adb"/>
     <path d="M1323.300 300H1331.400V493.300H1323.300z" fill="#4f6ec5"/>
     <path d="M1270 294L1331.400 286.700V299z" fill="#4f6ec5"/>
     <path d="M1163.700 301.700L1330 283.500v2.500L1271 293.500 1344.500 299.500V300.500H1323L1254.700 295.700H1231L1173 302.700z" fill="#0a0e1c" stroke-width=".8"/>
    </g>
    <use href="#bolt"/><use href="#bolt" y="103.700"/>
   </svg>
   <div class="code-info">DIN EN 1993:2015<br><u>S235 / S355 / S235</u>,&nbsp; 2 x 2 x M16&nbsp; /&nbsp; 2 x M16</div>
   <button class="dim-btn" aria-label="2D/3D"><svg width="22" height="22" viewBox="0 0 22 22" font-family="Roboto" font-size="9" font-weight="700" fill="#555"><text x="0" y="9">2D</text><text x="10" y="19">3D</text><path d="M4 19L19 4" stroke="#f0b040"/></svg></button>
   <div class="util"><div class="text-secondary">Auslastung</div><div class="d-flex align-items-center gap-1">Anschluss Nebenträger<div class="util-bar"><div style="width:79%"></div></div>79%</div></div>
   <div class="dlg">
    <div class="dlg-head d-flex align-items-center justify-content-between">Übersicht der Ergebnisse<button aria-label="Schließen"><svg width="11" height="11"><path d="M.5.5l10 10M10.500.5l-10 10" stroke="#888"/></svg></button></div>
    <div class="dlg-body">
     <div class="frame"><table class="res"><colgroup><col style="width:238px"><col style="width:203px"><col></colgroup>
      <thead><tr><th>Anschluss Hauptträger</th><th>Lastfallkombination</th><th>Auslastungsgrad</th></tr></thead>
      <tbody>
      <tr><td>Lochleibung Träger</td><td>1</td><td><div class="d-flex justify-content-between align-items-center"><div class="meter"><div style="width:16px"></div></div>0,16</div></td></tr>
      <tr><td>Lochleibung Winkel</td><td>1</td><td><div class="d-flex justify-content-between align-items-center"><div class="meter"><div style="width:35px"></div></div>0,35</div></td></tr>
      <tr><td>Abscheren Schrauben</td><td>1</td><td><div class="d-flex justify-content-between align-items-center"><div class="meter"><div style="width:69px"></div></div>0,69</div></td></tr>
      </tbody></table></div>
     <div class="frame"><table class="res"><colgroup><col style="width:242px"><col style="width:199px"><col></colgroup>
      <thead><tr><th>Anschluss Nebenträger</th><th>Lastfallkombination</th><th>Auslastungsgrad</th></tr></thead>
      <tbody>
      <tr><td>Lochleibung Träger</td><td>1</td><td><div class="d-flex justify-content-between align-items-center"><div class="meter"><div style="width:67px"></div></div>0,67</div></td></tr>
      <tr><td>Lochleibung Winkel</td><td>1</td><td><div class="d-flex justify-content-between align-items-center"><div class="meter"><div style="width:35px"></div></div>0,35</div></td></tr>
      <tr><td>Abscheren Schrauben</td><td>1</td><td><div class="d-flex justify-content-between align-items-center"><div class="meter"><div style="width:69px"></div></div>0,69</div></td></tr>
      <tr><td>Blockversagen Träger</td><td>1</td><td><div class="d-flex justify-content-between align-items-center"><div class="meter"><div style="width:55px"></div></div>0,55</div></td></tr>
      <tr><td>Blockversagen Winkel</td><td>1</td><td><div class="d-flex justify-content-between align-items-center"><div class="meter"><div style="width:30px"></div></div>0,30</div></td></tr>
      <tr><td>Ausklinkung</td><td>1</td><td><div class="d-flex justify-content-between align-items-center"><div class="meter"><div style="width:79px"></div></div>0,79</div></td></tr>
      <tr><td>Anschnitt Winkel</td><td>1</td><td><div class="d-flex justify-content-between align-items-center"><div class="meter"><div style="width:35px"></div></div>0,35</div></td></tr>
      </tbody></table></div>
     <div class="status-line">Berechnung ausgeführt.</div>
    </div>
   </div>
  </div>
  <div class="strip combo-strip d-flex"><button class="on d-flex align-items-center ps-1 gap-2"><svg width="15" height="13" viewBox="0 0 15 13" class="me-1"><path d="M0 0h15v13H0z" fill="#fff"/><path d="M0 0h15v3H0z" fill="#4a7bd8"/><path d="M.5 3v9.500h14V3M0 6.500h15M0 9.500h15M4.500 3v10M8.500 3v10M11.500 3v10" fill="none" stroke="#9fb4dc"/></svg>Lastfallkombinationen</button><button class="ms-auto pe-1" aria-label="Schließen"><svg width="8" height="8"><path d="M.5.5l7 7M7.500.5l-7 7" stroke="#000" stroke-width="1.600"/></svg></button></div>
  <div class="combo-panel d-flex justify-content-between align-items-start">
   <table class="combos"><colgroup><col style="width:29px"><col style="width:215px"><col style="width:54px"><col style="width:64px"><col style="width:181px"><col style="width:215px"><col style="width:98px"><col></colgroup>
    <thead><tr><td class="none"></td><th>Bezeichnung</th><th>Situation</th><th>Aktiv</th><th>Schnittufer</th><th>Bezugspunkt</th><th>Eingabe</th><th>Vzd</th></tr></thead>
    <tbody><tr class="units"><td class="none"></td><td></td><td></td><td><div class="d-flex justify-content-center gap-1"><input type="checkbox" class="tick soft" checked aria-label="Alle aktiv"><span class="split"></span><input type="checkbox" class="tick soft" aria-label="Keine aktiv"></div></td><td></td><td></td><td></td><td>[kN]</td></tr>
    <tr class="pick"><td class="num">1</td><td>Kombination 1</td><td>P/T</td><td><div class="d-flex justify-content-center"><input type="checkbox" class="tick" checked aria-label="Aktiv"></div></td><td class="ro">Nebenträger</td><td class="ro">A</td><td>aktiv</td><td class="text-end">65,0</td></tr></tbody>
   </table>
   <div class="vtools"><button aria-label="Prüfen"><svg width="14" height="15"><use href="#clip"/></svg></button><button aria-label="Neu"><svg width="16" height="16"><use href="#pageplus"/></svg></button><button aria-label="Zeile einfügen"><svg width="16" height="16" viewBox="0 0 16 16"><path d="M3.500 3.500v-2h12v3h-12M7.500 1v3M11.500 1v3M6 6.500h9.500v3H6zM3.500 12.500v2h12v-3h-12v2M7.500 12v3M11.500 12v3" fill="none" stroke="#333"/><path d="M0 8h6M3 5v6" stroke="#1c8a2c" stroke-width="1.800"/></svg></button></div>
  </div>
 </div>
</main>
<footer class="footer-bar"></footer>
</div>
<script src="https://cdn.jsdelivr.net/npm/bootstrap@5.3.0/dist/js/bootstrap.bundle.min.js"></script>
</body>
</html>
